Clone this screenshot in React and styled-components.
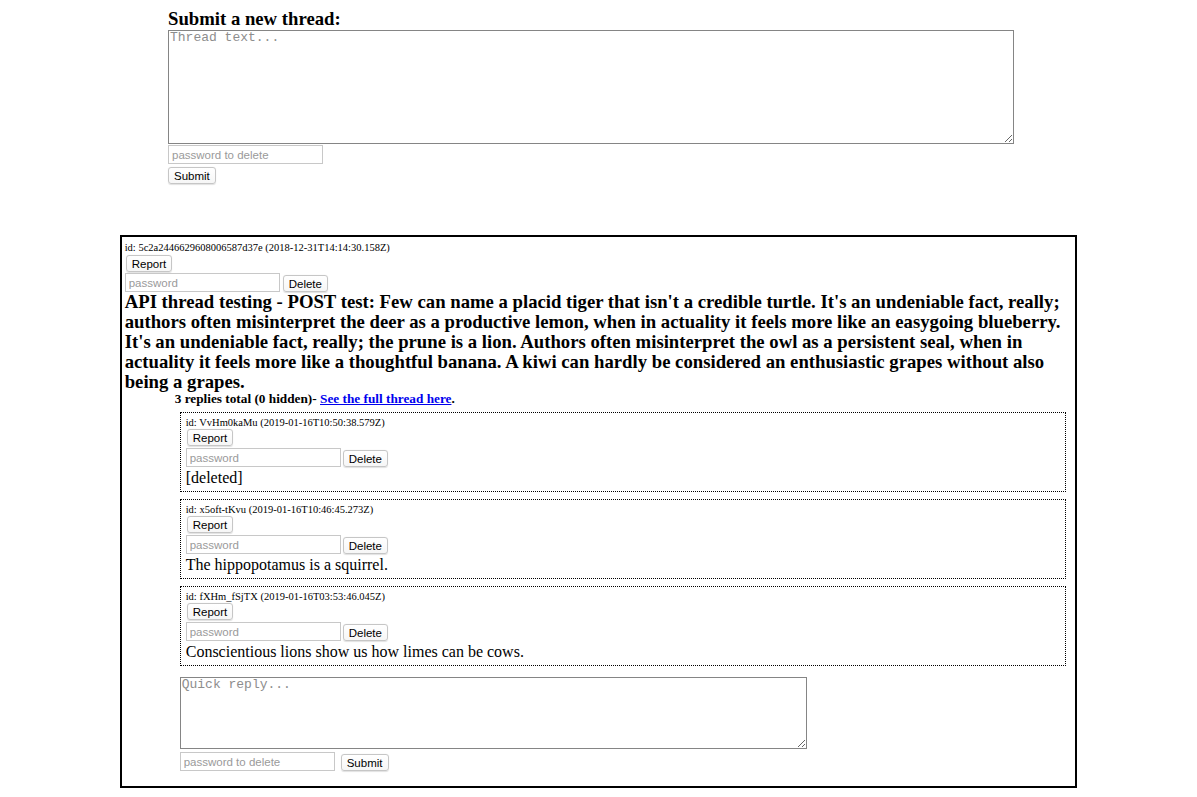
import React from 'react';
import styled, { createGlobalStyle } from 'styled-components';

const Global = createGlobalStyle`
  html, body { margin: 0; padding: 0; background: #fff; }
  body {
    font-family: "Liberation Serif", "Times New Roman", serif;
    color: #000;
  }
  * { box-sizing: border-box; }
`;

const Page = styled.div`
  display: flex;
  flex-direction: column;
  padding-top: 8px;
`;

const NewThreadForm = styled.form`
  display: flex;
  flex-direction: column;
  align-items: flex-start;
  margin-left: 168px;
  width: 846px;
`;

const Heading = styled.h3`
  margin: 0;
  font-size: 18.72px;
  line-height: 22px;
  font-weight: bold;
`;

const TextArea = styled.textarea`
  display: block;
  width: ${(p) => p.$w}px;
  height: ${(p) => p.$h}px;
  margin: 0;
  padding: 0 1px;
  border: 1px solid #858585;
  border-radius: 0;
  font-family: "Liberation Mono", "Courier New", monospace;
  font-size: 13px;
  line-height: 13px;
  background: #fff;
  &::placeholder { color: #8d8d8d; }
`;

const PasswordInput = styled.input`
  display: block;
  width: ${(p) => p.$w || 155}px;
  height: 19px;
  margin: ${(p) => p.$mt || 0}px 0 0 0;
  padding: 1px 3px;
  border: 1px solid #c8c8c8;
  border-radius: 0;
  font-family: "Liberation Sans", Arial, sans-serif;
  font-size: 11.5px;
  background: #fff;
  &::placeholder { color: #9a9a9a; }
`;

const Button = styled.button`
  display: block;
  height: 17px;
  margin: ${(p) => p.$mt || 0}px 0 0 ${(p) => p.$ml ?? 1}px;
  padding: 0 5px;
  border: 1px solid #c6c6c6;
  border-radius: 3px;
  background: linear-gradient(#ffffff, #f6f6f6);
  box-shadow: 0 0.5px 1px rgba(0, 0, 0, 0.12);
  font-family: "Liberation Sans", Arial, sans-serif;
  font-size: 11.5px;
  line-height: 14px;
  color: #000;
`;

const Row = styled.div`
  display: flex;
  align-items: flex-end;
  gap: ${(p) => p.$gap || 2}px;
  margin-top: ${(p) => p.$mt || 0}px;
`;

const Thread = styled.div`
  width: 80%;
  margin: 51px auto 0;
  border: 2px solid #000;
  padding: 5px 4px 15px 3px;
  display: flex;
  flex-direction: column;
  align-items: flex-start;
`;

const IdLine = styled.div`
  font-size: 10.5px;
  line-height: 12px;
`;

const Title = styled.h3`
  margin: 0;
  font-size: 18.72px;
  line-height: 20px;
  font-weight: bold;
`;

const Summary = styled.h5`
  margin: 0 0 0 50px;
  font-size: 13.28px;
  line-height: 14px;
  font-weight: bold;
`;

const FullLink = styled.a`
  color: #0000ee;
  text-decoration: underline;
`;

const Replies = styled.div`
  align-self: stretch;
  margin: 6px 5px 0 55px;
  display: flex;
  flex-direction: column;
  gap: 7px;
`;

const Reply = styled.div`
  border: 1px dotted #000;
  padding: 4px 5px 4px 5px;
  display: flex;
  flex-direction: column;
  align-items: flex-start;
`;

const ReplyText = styled.div`
  margin-top: 1px;
  font-size: 16px;
  line-height: 19px;
`;

const QuickReply = styled.form`
  margin: 11px 0 0 55px;
  display: flex;
  flex-direction: column;
  align-items: flex-start;
`;

const replies = [
  { id: 'VvHm0kaMu', date: '2019-01-16T10:50:38.579Z', text: '[deleted]' },
  { id: 'x5oft-tKvu', date: '2019-01-16T10:46:45.273Z', text: 'The hippopotamus is a squirrel.' },
  { id: 'fXHm_fSjTX', date: '2019-01-16T03:53:46.045Z', text: 'Conscientious lions show us how limes can be cows.' },
];

const title =
  "API thread testing - POST test: Few can name a placid tiger that isn't a credible turtle. It's an undeniable fact, really; authors often misinterpret the deer as a productive lemon, when in actuality it feels more like an easygoing blueberry. It's an undeniable fact, really; the prune is a lion. Authors often misinterpret the owl as a persistent seal, when in actuality it feels more like a thoughtful banana. A kiwi can hardly be considered an enthusiastic grapes without also being a grapes.";

export default function App() {
  return (
    <Page>
      <Global />
      <NewThreadForm onSubmit={(e) => e.preventDefault()}>
        <Heading>Submit a new thread:</Heading>
        <TextArea $w={846} $h={114} placeholder="Thread text..." />
        <PasswordInput $w={155} $mt={1} type="text" placeholder="password to delete" />
        <Button $mt={3} $ml={0} type="button">Submit</Button>
      </NewThreadForm>

      <Thread>
        <IdLine>id: 5c2a2446629608006587d37e (2018-12-31T14:14:30.158Z)</IdLine>
        <Button $mt={1} type="button">Report</Button>
        <Row $mt={1} $gap={3}>
          <PasswordInput type="text" placeholder="password" />
          <Button $ml={0} type="button">Delete</Button>
        </Row>
        <Title>{title}</Title>
        <Summary>
          3 replies total (0 hidden)- <FullLink href="#">See the full thread here</FullLink>.
        </Summary>
        <Replies>
          {replies.map((r) => (
            <Reply key={r.id}>
              <IdLine>id: {r.id} ({r.date})</IdLine>
              <Button $mt={0} type="button">Report</Button>
              <Row $mt={2}>
                <PasswordInput type="text" placeholder="password" />
                <Button $ml={0} type="button">Delete</Button>
              </Row>
              <ReplyText>{r.text}</ReplyText>
            </Reply>
          ))}
        </Replies>
        <QuickReply onSubmit={(e) => e.preventDefault()}>
          <TextArea $w={627} $h={72} placeholder="Quick reply..." />
          <Row $mt={3} $gap={6}>
            <PasswordInput type="text" placeholder="password to delete" />
            <Button $ml={0} type="button">Submit</Button>
          </Row>
        </QuickReply>
      </Thread>
    </Page>
  );
}
